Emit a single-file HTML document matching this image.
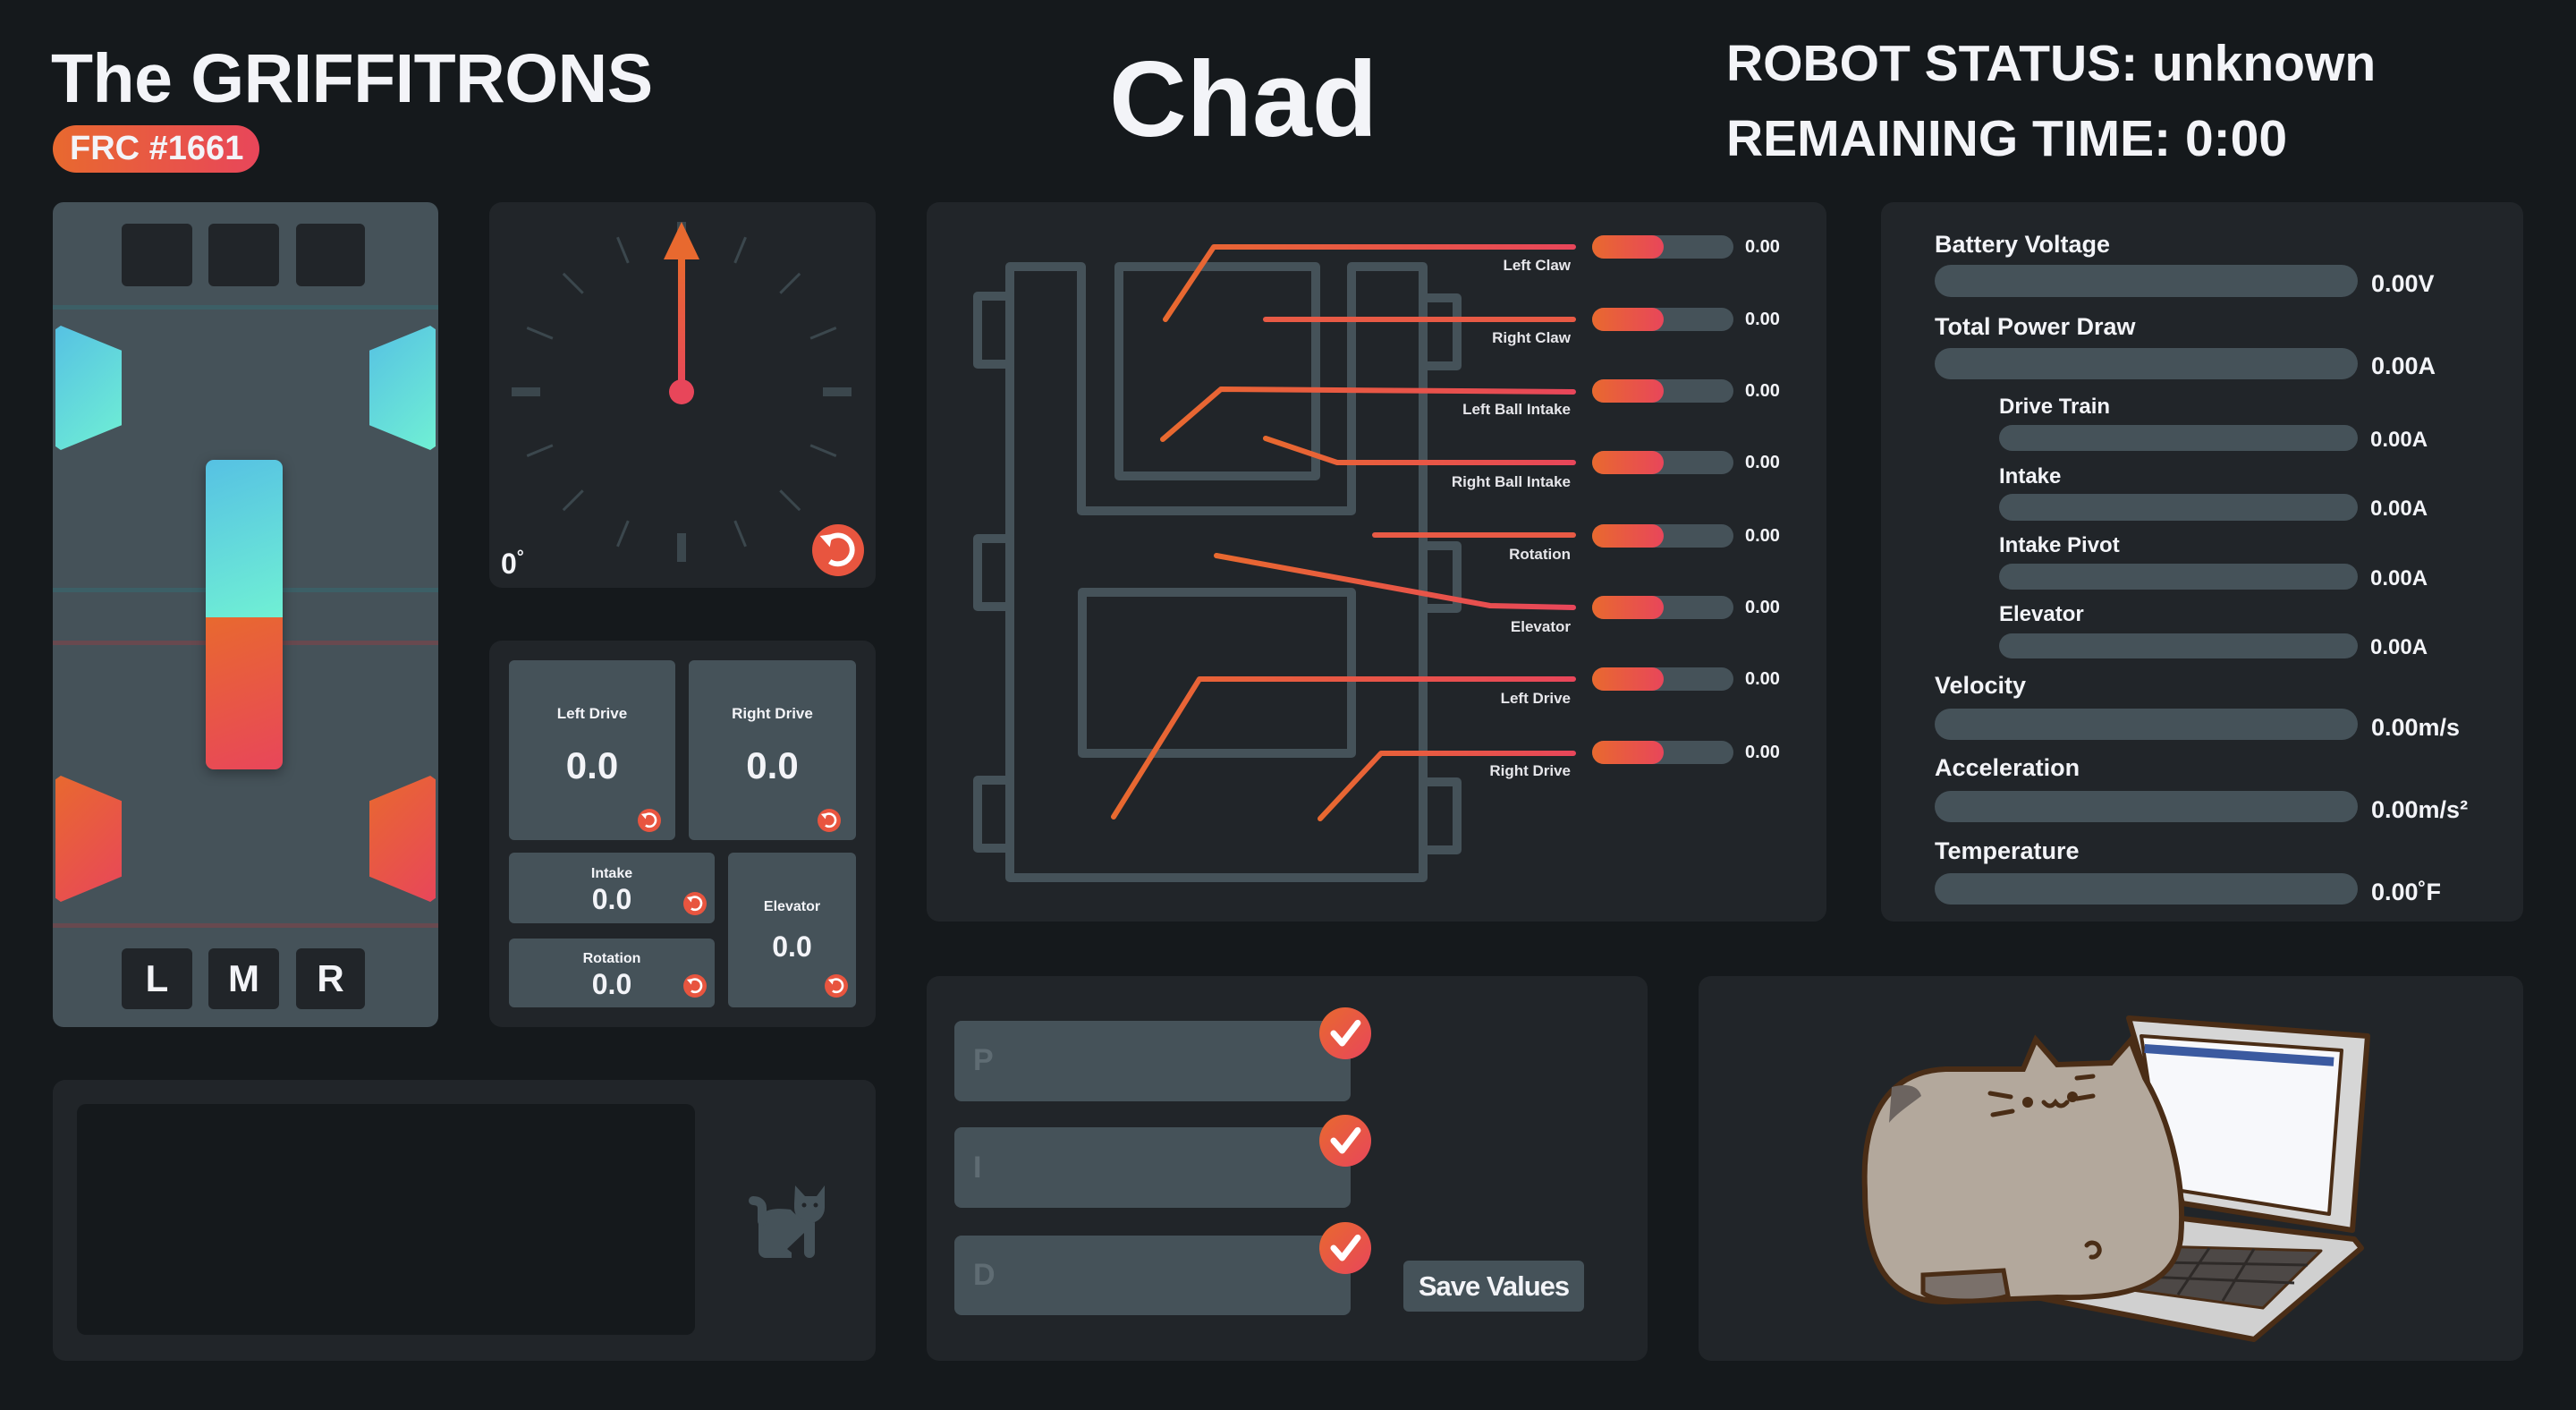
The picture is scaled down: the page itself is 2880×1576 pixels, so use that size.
<!DOCTYPE html>
<html><head><meta charset="utf-8"><style>
*{margin:0;padding:0;box-sizing:border-box}
body{width:2880px;height:1576px;background:#15191c;position:relative;overflow:hidden;font-family:"Liberation Sans",sans-serif;font-weight:bold;color:#f3f4f8}
.a{position:absolute}
.p{position:absolute;background:#212529;border-radius:14px}
.g{background:#455259}
.t{position:absolute;white-space:nowrap}
.c{text-align:center}
</style></head><body>
<div class="t" style="left:57px;top:44px;font-size:77px;letter-spacing:-0.5px">The GRIFFITRONS</div>
<div class="a" style="left:59px;top:140px;width:231px;height:53px;border-radius:27px;background:linear-gradient(90deg,#e8692f,#e8465a)"></div>
<div class="t" style="left:78px;top:145px;font-size:38px">FRC #1661</div>
<div class="t c" style="left:1140px;width:500px;top:42px;font-size:120px">Chad</div>
<div class="t" style="left:1930px;top:38px;font-size:57px">ROBOT STATUS: unknown</div>
<div class="t" style="left:1930px;top:122px;font-size:57px">REMAINING TIME: 0:00</div>

<!-- panels -->
<div class="p g" style="left:59px;top:226px;width:431px;height:922px;border-radius:12px"></div>
<div class="p" style="left:547px;top:226px;width:432px;height:431px"></div>
<div class="p" style="left:547px;top:716px;width:432px;height:432px"></div>
<div class="p" style="left:1036px;top:226px;width:1006px;height:804px"></div>
<div class="p" style="left:2103px;top:226px;width:718px;height:804px"></div>
<div class="p" style="left:59px;top:1207px;width:920px;height:314px"></div>
<div class="p" style="left:1036px;top:1091px;width:806px;height:430px"></div>
<div class="p" style="left:1899px;top:1091px;width:922px;height:430px"></div>

<!-- robot panel -->
<div class="a" style="left:136px;top:250px;width:79px;height:70px;background:#212529;border-radius:6px"></div>
<div class="a" style="left:233px;top:250px;width:79px;height:70px;background:#212529;border-radius:6px"></div>
<div class="a" style="left:331px;top:250px;width:77px;height:70px;background:#212529;border-radius:6px"></div>
<div class="a" style="left:59px;top:341px;width:431px;height:5px;background:#3c5f66"></div>
<div class="a" style="left:59px;top:657px;width:431px;height:5px;background:#3c5f66"></div>
<div class="a" style="left:59px;top:716px;width:431px;height:5px;background:#68494f"></div>
<div class="a" style="left:59px;top:1032px;width:431px;height:5px;background:#68494f"></div>
<div class="a" style="left:62px;top:364px;width:74px;height:139px;background:linear-gradient(135deg,#56c1e3,#70f0d4);clip-path:polygon(0 3%,8% 0,100% 20%,100% 80%,8% 100%,0 97%)"></div>
<div class="a" style="left:413px;top:364px;width:74px;height:139px;background:linear-gradient(135deg,#56c1e3,#70f0d4);clip-path:polygon(100% 3%,92% 0,0 20%,0 80%,92% 100%,100% 97%)"></div>
<div class="a" style="left:62px;top:867px;width:74px;height:141px;background:linear-gradient(135deg,#e8692f,#e8465a);clip-path:polygon(0 3%,8% 0,100% 20%,100% 80%,8% 100%,0 97%)"></div>
<div class="a" style="left:413px;top:867px;width:74px;height:141px;background:linear-gradient(135deg,#e8692f,#e8465a);clip-path:polygon(100% 3%,92% 0,0 20%,0 80%,92% 100%,100% 97%)"></div>
<div class="a" style="left:230px;top:514px;width:86px;height:346px;border-radius:9px;overflow:hidden;box-shadow:0 4px 14px rgba(0,0,0,.35)">
<div style="height:176px;background:linear-gradient(160deg,#56c1e3,#70f0d4)"></div>
<div style="height:170px;background:linear-gradient(160deg,#e8692f,#e8465a)"></div></div>
<div class="a t c" style="left:136px;top:1060px;width:79px;height:68px;line-height:68px;background:#212529;border-radius:6px;font-size:42px">L</div>
<div class="a t c" style="left:233px;top:1060px;width:79px;height:68px;line-height:68px;background:#212529;border-radius:6px;font-size:42px">M</div>
<div class="a t c" style="left:331px;top:1060px;width:77px;height:68px;line-height:68px;background:#212529;border-radius:6px;font-size:42px">R</div>

<!-- motor cards -->
<div class="a g" style="left:569px;top:738px;width:186px;height:201px;border-radius:6px"></div>
<div class="a g" style="left:770px;top:738px;width:187px;height:201px;border-radius:6px"></div>
<div class="a g" style="left:569px;top:953px;width:230px;height:79px;border-radius:6px"></div>
<div class="a g" style="left:569px;top:1049px;width:230px;height:77px;border-radius:6px"></div>
<div class="a g" style="left:814px;top:953px;width:143px;height:173px;border-radius:6px"></div>
<div class="t c" style="left:569px;width:186px;top:788px;font-size:17px">Left Drive</div>
<div class="t c" style="left:569px;width:186px;top:832px;font-size:42px">0.0</div>
<div class="t c" style="left:770px;width:187px;top:788px;font-size:17px">Right Drive</div>
<div class="t c" style="left:770px;width:187px;top:832px;font-size:42px">0.0</div>
<div class="t c" style="left:569px;width:230px;top:968px;font-size:16px">Intake</div>
<div class="t c" style="left:569px;width:230px;top:987px;font-size:32px">0.0</div>
<div class="t c" style="left:569px;width:230px;top:1063px;font-size:16px">Rotation</div>
<div class="t c" style="left:569px;width:230px;top:1082px;font-size:32px">0.0</div>
<div class="t c" style="left:814px;width:143px;top:1005px;font-size:16px">Elevator</div>
<div class="t c" style="left:814px;width:143px;top:1040px;font-size:32px">0.0</div>

<div class="t" style="left:560px;top:612px;font-size:32px">0<span style="font-size:20px;vertical-align:top">°</span></div>

<!-- right panel -->
<div class="t" style="left:2163px;top:258px;font-size:27px">Battery Voltage</div>
<div class="a g" style="left:2163px;top:296px;width:473px;height:36px;border-radius:18px"></div>
<div class="t" style="left:2651px;top:302px;font-size:27px">0.00V</div>
<div class="t" style="left:2163px;top:350px;font-size:27px">Total Power Draw</div>
<div class="a g" style="left:2163px;top:389px;width:473px;height:35px;border-radius:18px"></div>
<div class="t" style="left:2651px;top:394px;font-size:27px">0.00A</div>
<div class="t" style="left:2235px;top:441px;font-size:24px">Drive Train</div>
<div class="a g" style="left:2235px;top:475px;width:401px;height:29px;border-radius:15px"></div>
<div class="t" style="left:2650px;top:478px;font-size:24px">0.00A</div>
<div class="t" style="left:2235px;top:519px;font-size:24px">Intake</div>
<div class="a g" style="left:2235px;top:552px;width:401px;height:30px;border-radius:15px"></div>
<div class="t" style="left:2650px;top:555px;font-size:24px">0.00A</div>
<div class="t" style="left:2235px;top:596px;font-size:24px">Intake Pivot</div>
<div class="a g" style="left:2235px;top:630px;width:401px;height:29px;border-radius:15px"></div>
<div class="t" style="left:2650px;top:633px;font-size:24px">0.00A</div>
<div class="t" style="left:2235px;top:673px;font-size:24px">Elevator</div>
<div class="a g" style="left:2235px;top:708px;width:401px;height:28px;border-radius:14px"></div>
<div class="t" style="left:2650px;top:710px;font-size:24px">0.00A</div>
<div class="t" style="left:2163px;top:751px;font-size:27px">Velocity</div>
<div class="a g" style="left:2163px;top:792px;width:473px;height:35px;border-radius:18px"></div>
<div class="t" style="left:2651px;top:798px;font-size:27px">0.00m/s</div>
<div class="t" style="left:2163px;top:843px;font-size:27px">Acceleration</div>
<div class="a g" style="left:2163px;top:884px;width:473px;height:35px;border-radius:18px"></div>
<div class="t" style="left:2651px;top:890px;font-size:27px">0.00m/s²</div>
<div class="t" style="left:2163px;top:936px;font-size:27px">Temperature</div>
<div class="a g" style="left:2163px;top:976px;width:473px;height:35px;border-radius:18px"></div>
<div class="t" style="left:2651px;top:982px;font-size:27px">0.00˚F</div>

<div class="a" style="left:86px;top:1234px;width:691px;height:258px;background:#15191c;border-radius:10px"></div>

<!-- PID -->
<div class="a g" style="left:1067px;top:1141px;width:443px;height:90px;border-radius:8px"></div>
<div class="a g" style="left:1067px;top:1260px;width:443px;height:90px;border-radius:8px"></div>
<div class="a g" style="left:1067px;top:1381px;width:443px;height:89px;border-radius:8px"></div>
<div class="t" style="left:1088px;top:1166px;font-size:34px;color:#5f6c73">P</div>
<div class="t" style="left:1088px;top:1286px;font-size:34px;color:#5f6c73">I</div>
<div class="t" style="left:1088px;top:1406px;font-size:34px;color:#5f6c73">D</div>
<div class="a g t c" style="left:1569px;top:1409px;width:202px;height:57px;line-height:57px;border-radius:6px;font-size:31px;letter-spacing:-1px">Save Values</div>

<svg class="a" style="left:0;top:0" width="2880" height="1576" viewBox="0 0 2880 1576">
<defs>
<linearGradient id="or" x1="0" y1="0" x2="1" y2="1"><stop offset="0" stop-color="#e8692f"/><stop offset="1" stop-color="#e8465a"/></linearGradient>
<linearGradient id="orh" x1="0" y1="0" x2="1" y2="0"><stop offset="0" stop-color="#e8692f"/><stop offset="1" stop-color="#e8465a"/></linearGradient>
<linearGradient id="orv" x1="0" y1="0" x2="0" y2="1"><stop offset="0" stop-color="#e8692f"/><stop offset="1" stop-color="#e8465a"/></linearGradient>
<symbol id="rst" viewBox="-10 -10 20 20" overflow="visible">
<circle r="10" fill="#e8553f"/>
<path d="M-4.5,-3.5 A5.5,5.5 0 1 1 -3.2,4.3" fill="none" stroke="#fff" stroke-width="2"/>
<path d="M-7,-5.5 L-3.2,-1.2 L-2.2,-6.2 Z" fill="#fff"/>
</symbol>
<symbol id="chk" viewBox="-10 -10 20 20" overflow="visible">
<circle r="10" fill="url(#or)"/>
<path d="M-4.5,0 L-1.2,3.8 L4.8,-4" fill="none" stroke="#fff" stroke-width="2.4" stroke-linecap="round" stroke-linejoin="round"/>
</symbol>
</defs>

<g transform="translate(762,438)" stroke="#3b474d" stroke-width="3">
<g id="mn"><line x1="0" y1="-156" x2="0" y2="-187" transform="rotate(22.5)"/><line x1="0" y1="-156" x2="0" y2="-187" transform="rotate(45)"/><line x1="0" y1="-156" x2="0" y2="-187" transform="rotate(67.5)"/></g>
<use href="#mn" transform="rotate(90)"/><use href="#mn" transform="rotate(180)"/><use href="#mn" transform="rotate(270)"/>
<g fill="#3b474d" stroke="none"><rect x="-5" y="-190" width="10" height="32"/><rect x="-5" y="-190" width="10" height="32" transform="rotate(90)"/><rect x="-5" y="-190" width="10" height="32" transform="rotate(180)"/><rect x="-5" y="-190" width="10" height="32" transform="rotate(270)"/></g>
<rect x="-4" y="-150" width="8" height="150" fill="url(#orv)" stroke="none"/>
<path d="M0,-190 L20,-148 L-20,-148 Z" fill="#e8692f" stroke="none"/>
<circle r="14" fill="#e8465a" stroke="none"/>
</g>
<use href="#rst" x="908" y="586" width="58" height="58"/>
<use href="#rst" x="713" y="904" width="26" height="26"/>
<use href="#rst" x="914" y="904" width="26" height="26"/>
<use href="#rst" x="764" y="997" width="26" height="26"/>
<use href="#rst" x="764" y="1089" width="26" height="26"/>
<use href="#rst" x="922" y="1089" width="26" height="26"/>

<g fill="none" stroke="#455259" stroke-width="10" stroke-linejoin="round">
<path d="M1129,298 L1209,298 L1209,571 L1511,571 L1511,298 L1591,298 L1591,981 L1129,981 Z"/>
<rect x="1251" y="298" width="220" height="234"/>
<rect x="1210" y="662" width="301" height="180"/>
<rect x="1093" y="331" width="36" height="76"/><rect x="1093" y="602" width="36" height="76"/><rect x="1093" y="872" width="36" height="76"/>
<rect x="1591" y="333" width="38" height="76"/><rect x="1591" y="610" width="38" height="70"/><rect x="1591" y="874" width="38" height="76"/>
</g>
<g fill="none" stroke="url(#orh)" stroke-width="6" stroke-linecap="round" stroke-linejoin="round">
<polyline points="1303,357 1357,276 1759,276"/>
<polyline points="1415,357 1759,357" stroke="#e85a45"/>
<polyline points="1300,491 1365,435 1759,438"/>
<polyline points="1415,490 1495,517 1759,517"/>
<polyline points="1537,598 1759,598" stroke="#e85a45"/>
<polyline points="1360,621 1666,677 1759,679"/>
<polyline points="1245,913 1341,759 1759,759"/>
<polyline points="1476,915 1544,842 1759,842"/>
</g>
<g font-size="17" fill="#e6e6ea" text-anchor="end" font-weight="bold">
<text x="1756" y="302">Left Claw</text><text x="1756" y="383">Right Claw</text><text x="1756" y="463">Left Ball Intake</text><text x="1756" y="544">Right Ball Intake</text>
<text x="1756" y="625">Rotation</text><text x="1756" y="706">Elevator</text><text x="1756" y="786">Left Drive</text><text x="1756" y="867">Right Drive</text>
</g>
<g id="sl"><rect x="1780" y="263" width="158" height="26" rx="13" fill="#455259"/><rect x="1780" y="263" width="80" height="26" rx="13" fill="url(#orh)"/></g>
<use href="#sl" y="81"/><use href="#sl" y="161"/><use href="#sl" y="241"/><use href="#sl" y="323"/><use href="#sl" y="403"/><use href="#sl" y="483"/><use href="#sl" y="565"/>
<g font-size="20" fill="#f3f4f8" font-weight="bold">
<text x="1951" y="282">0.00</text><text x="1951" y="363">0.00</text><text x="1951" y="443">0.00</text><text x="1951" y="523">0.00</text>
<text x="1951" y="605">0.00</text><text x="1951" y="685">0.00</text><text x="1951" y="765">0.00</text><text x="1951" y="847">0.00</text>
</g>

<use href="#chk" x="1475" y="1126" width="58" height="58"/>
<use href="#chk" x="1475" y="1246" width="58" height="58"/>
<use href="#chk" x="1475" y="1366" width="58" height="58"/>

<g fill="#455259">
<path d="M888,1345 L889,1325 L900,1337 L913,1337 L922,1325 L922,1350 A17,17 0 0 1 888,1350 Z"/>
<path d="M848,1365 C850,1350 870,1350 884,1352 C893,1362 905,1368 911,1366 L911,1400 A6,6 0 0 1 899,1400 L899,1378 L880,1396 L885,1400 L885,1406 L856,1406 A8,8 0 0 1 848,1398 Z"/>
<path d="M852,1365 L852,1350 C852,1345 848,1342 842,1342" fill="none" stroke="#455259" stroke-width="10" stroke-linecap="round"/>
</g>
<circle cx="899" cy="1347" r="2.5" fill="#212529"/><circle cx="912" cy="1347" r="2.5" fill="#212529"/>

<!-- pusheen -->
<g stroke="#4a2d16" stroke-width="6" stroke-linejoin="round">
<polygon points="2380,1138 2647,1158 2630,1375 2440,1345" fill="#d6d6d6"/>
<polygon points="2394,1158 2618,1174 2604,1357 2420,1328" fill="#f7f8fb" stroke-width="4"/>
<polygon points="2300,1400 2440,1362 2632,1385 2640,1395 2520,1497 2250,1445" fill="#d0d0d0"/>
<polygon points="2370,1392 2595,1398 2530,1462 2340,1436" fill="#4d4846" stroke-width="3"/>
</g>
<g stroke="#2e2a28" stroke-width="3"><line x1="2420" y1="1392" x2="2385" y2="1440"/><line x1="2470" y1="1395" x2="2435" y2="1447"/><line x1="2520" y1="1396" x2="2485" y2="1454"/><line x1="2360" y1="1410" x2="2580" y2="1414"/><line x1="2350" y1="1425" x2="2565" y2="1434"/></g>
<rect x="2398" y="1167" width="212" height="10" fill="#3b5aa0" transform="rotate(4 2398 1167)"/>
<path d="M2085,1330 C2080,1230 2125,1197 2175,1195 L2262,1195 L2276,1162 L2300,1190 L2360,1188 L2382,1163 L2398,1205 C2430,1260 2443,1330 2438,1385 C2430,1440 2370,1452 2300,1450 L2175,1455 C2110,1455 2085,1410 2085,1330 Z" fill="#b3a89c" stroke="#4a2d16" stroke-width="6"/>
<path d="M2150,1425 L2240,1420 L2245,1448 C2230,1455 2165,1458 2150,1445 Z" fill="#7a706a" stroke="#4a2d16" stroke-width="5"/>
<path d="M2115,1215 C2135,1210 2145,1215 2148,1225 C2135,1235 2120,1245 2112,1255 Z" fill="#6c6460"/>
<g stroke="#4a2d16" stroke-width="5" stroke-linecap="round" fill="none">
<path d="M2225,1222 L2248,1226 M2228,1246 L2250,1242 M2322,1205 L2340,1203 M2322,1228 L2340,1225"/>
<path d="M2285,1232 Q2292,1240 2298,1232 Q2304,1240 2311,1232"/>
<path d="M2333,1392 A8,8 0 1 1 2338,1405"/>
</g>
<circle cx="2267" cy="1232" r="6" fill="#4a2d16"/><circle cx="2317" cy="1226" r="6" fill="#4a2d16"/>
</svg>
</body></html>
